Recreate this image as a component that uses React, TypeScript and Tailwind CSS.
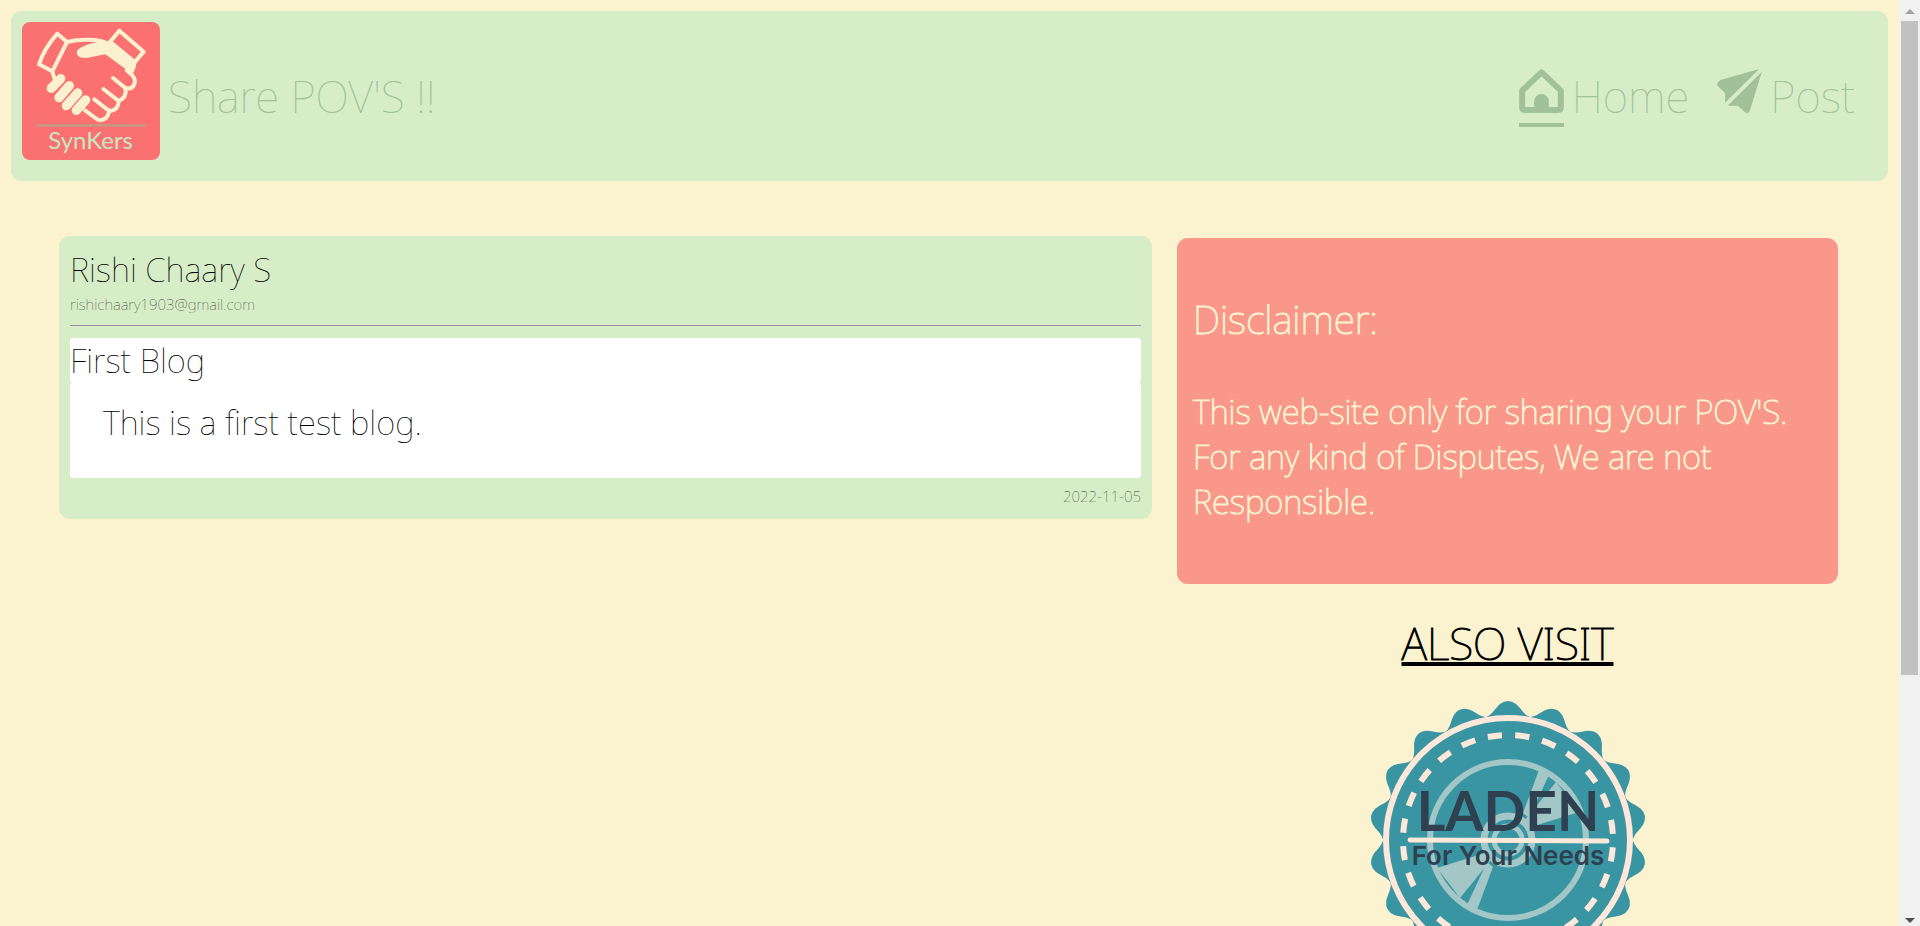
const rotations = Array.from({ length: 18 }, (_, i) => i * 20);

function Handshake() {
  return (
    <svg viewBox="36 36 414 414" className="size-[138px] rounded-lg bg-[#fb7070]" role="img" aria-label="SynKers">
      <g fill="none" stroke="#fbf1cf" strokeWidth="12" strokeLinejoin="round" strokeLinecap="round">
        <path d="M142 71 L171 96 L127 184 L87 163 Q102 116 142 71 Z" />
        <path d="M328 62 L401 125 L373 158 L300 96 Z" />
        <path d="M171 96 C210 86 265 87 290 99" />
        <path d="M127 184 L133 205" />
        <path d="M309 204 L346 234 Q364 240 372 225 Q379 210 367 196 L350 181" />
        <path d="M280 237 L326 273 Q352 262 346 236" />
        <path d="M253 268 L290 297 Q296 302 303 303 Q326 298 326 273" />
        <path d="M297 304 Q294 329 271 331 Q262 329 256 324 L225 301" />
      </g>
      <path d="M292 94 L306 92 L376 150 L380 158 Q377 178 368 193 L286 133 L244 141 Q218 149 204 138 Q194 124 210 114 Q246 94 292 94 Z" fill="#fbf1cf" />
      <g stroke="#fbf1cf" strokeWidth="28" strokeLinecap="round">
        <path d="M124 235 L152 206" />
        <path d="M147 263 L178 227" />
        <path d="M169 287 L203 249" />
        <path d="M199 301 L227 270" />
      </g>
      <path d="M81 346 H405" stroke="#cc9680" strokeWidth="8" strokeLinecap="round" />
      <text x="242" y="418" textAnchor="middle" fill="#c8e6c2" fontSize="72" fontWeight="400" fontFamily="Lato, sans-serif">
        SynKers
      </text>
    </svg>
  );
}

function HomeIcon() {
  return (
    <svg viewBox="0 0 134 132" className="h-11 w-[45px]" aria-hidden="true">
      <path d="M67 10 L125 65 V115 Q125 123 117 123 H17 Q9 123 9 115 V65 Z" fill="none" stroke="#a0c19a" strokeWidth="18" strokeLinejoin="round" />
      <path d="M45 118 V97 A22 22 0 0 1 89 97 V118 Z" fill="#a0c19a" />
    </svg>
  );
}

function PlaneIcon() {
  return (
    <svg viewBox="0 0 134 132" className="h-11 w-[45px]" fill="#a0c19a" aria-hidden="true">
      <path d="M126 0 L10 33 Q-3 40 1 50 L24 72 V101 Z" />
      <path d="M134 8 L99 122 Q95 136 83 130 L62 110 H31 Z" />
    </svg>
  );
}

function LadenBadge() {
  return (
    <svg viewBox="-140 -140 280 280" className="size-[280px] shrink-0" role="img" aria-label="Laden, for your needs">
      <g fill="#3995a2">
        <circle r="125" />
        {rotations.map((a) => (
          <path key={a} transform={`rotate(${a})`} d="M-24 -122 C-15 -125 -14 -131 -8 -136 Q0 -142 8 -136 C14 -131 15 -125 24 -122 Z" />
        ))}
      </g>
      <circle r="122" fill="none" stroke="#fde8d9" strokeWidth="6" />
      <circle r="105" fill="none" stroke="#fde8d9" strokeWidth="6" pathLength="240" strokeDasharray="5.2 4.8" transform="rotate(-101.5)" strokeDashoffset="-0.3" />
      <g fill="none" stroke="#a3c7c6">
        <circle r="78" strokeWidth="6" />
        <circle r="24" strokeWidth="7" />
        <circle r="14" strokeWidth="5" />
      </g>
      <g fill="#a3c7c6">
        {[0, 180].map((a) => (
          <g key={a} transform={`rotate(${a})`}>
            <path d="M31 -70 L41 -65 L21 -22 L15 -27 Z" />
            <path d="M48 -58 L71 -28 L23 -13 L17 -20 Z" />
          </g>
        ))}
      </g>
      <g fill="#2f4050" textAnchor="middle">
        <text y="-9" fontSize="55" fontWeight="700" fontFamily="Lato, sans-serif">LADEN</text>
        <text y="25" fontSize="26" fontWeight="600" fontFamily="Inter, sans-serif">For Your Needs</text>
      </g>
      <path d="M-98 0 L99 1" stroke="#fde8d9" strokeWidth="5" strokeLinecap="round" />
    </svg>
  );
}

function Scrollbar() {
  return (
    <div className="flex w-[21px] shrink-0 flex-col items-center bg-[#f1f1f1]" aria-hidden="true">
      <svg viewBox="0 0 20 21" className="h-[21px] w-5">
        <path d="M5 14 L10 9 L15 14 Z" fill="#a3a3a3" />
      </svg>
      <div className="h-[654px] w-[17px] bg-[#c1c1c1]" />
      <svg viewBox="0 0 20 21" className="mt-auto h-[21px] w-5">
        <path d="M5 13 L10 18 L15 13 Z" fill="#505050" />
      </svg>
    </div>
  );
}

export default function App() {
  return (
    <div className="flex h-screen overflow-hidden bg-[#fbf2cf] font-['Noto_Sans',sans-serif] font-thin text-black">
      <div className="min-w-0 flex-1 p-[11px]">
        <header className="flex h-[170px] items-start justify-between rounded-[11px] bg-[#d7edc7] p-[11px] text-[44px] text-[#a0c19a]">
          <div className="flex items-center gap-2">
            <Handshake />
            <h1 className="pt-[10px] leading-[62px]">Share POV'S !!</h1>
          </div>
          <nav className="flex gap-7 pt-[47px] pr-[22px]">
            <a href="#home" className="flex gap-2">
              <span className="flex h-[58px] flex-col justify-between border-b-4 border-[#a0c19a]">
                <HomeIcon />
              </span>
              <span className="pt-[5px] leading-[44px]">Home</span>
            </a>
            <a href="#post" className="flex gap-2">
              <PlaneIcon />
              <span className="pt-[5px] leading-[44px]">Post</span>
            </a>
          </nav>
        </header>
        <main className="grid grid-cols-[1093fr_661fr] items-start gap-[25px] pt-[55px] pr-[50px] pl-12">
          <article className="rounded-[11px] bg-[#d7edc7] px-[11px] pt-[11px] pb-[11px]">
            <h2 className="text-[33px] leading-[45px]">Rishi Chaary S</h2>
            <p className="pt-px text-[15px] leading-[23px] opacity-75">rishichaary1903@gmail.com</p>
            <hr className="mt-[9px] mb-3 border-t border-[#9a939f]" />
            <h3 className="rounded-[3px] bg-white text-[33px] leading-[45px]">First Blog</h3>
            <p className="rounded-[3px] bg-white px-[33px] pt-[17px] pb-[33px] text-[33px] leading-[45px]">This is a first test blog.</p>
            <p className="pt-[7px] text-right text-[15px] leading-[23px] opacity-75">2022-11-05</p>
          </article>
          <aside className="flex flex-col items-center pt-[2px]">
            <section className="w-full rounded-[11px] bg-[#fa978b] px-4 pt-[54px] pb-[60px] text-[#fbf2cf] [-webkit-text-stroke:1px_#fbf2cf]">
              <h2 className="text-[39px] leading-[54px]">Disclaimer:</h2>
              <p className="pt-[43px] text-[33px] leading-[45px]">
                This web-site only for sharing your POV'S. For any kind of Disputes, We are not Responsible.
              </p>
            </section>
            <h2 className="pt-[29px] pb-[26px] text-[44px] leading-[61px] underline decoration-4 [-webkit-text-stroke:1px_black]">ALSO VISIT</h2>
            <a href="#laden">
              <LadenBadge />
            </a>
          </aside>
        </main>
      </div>
      <Scrollbar />
    </div>
  );
}
